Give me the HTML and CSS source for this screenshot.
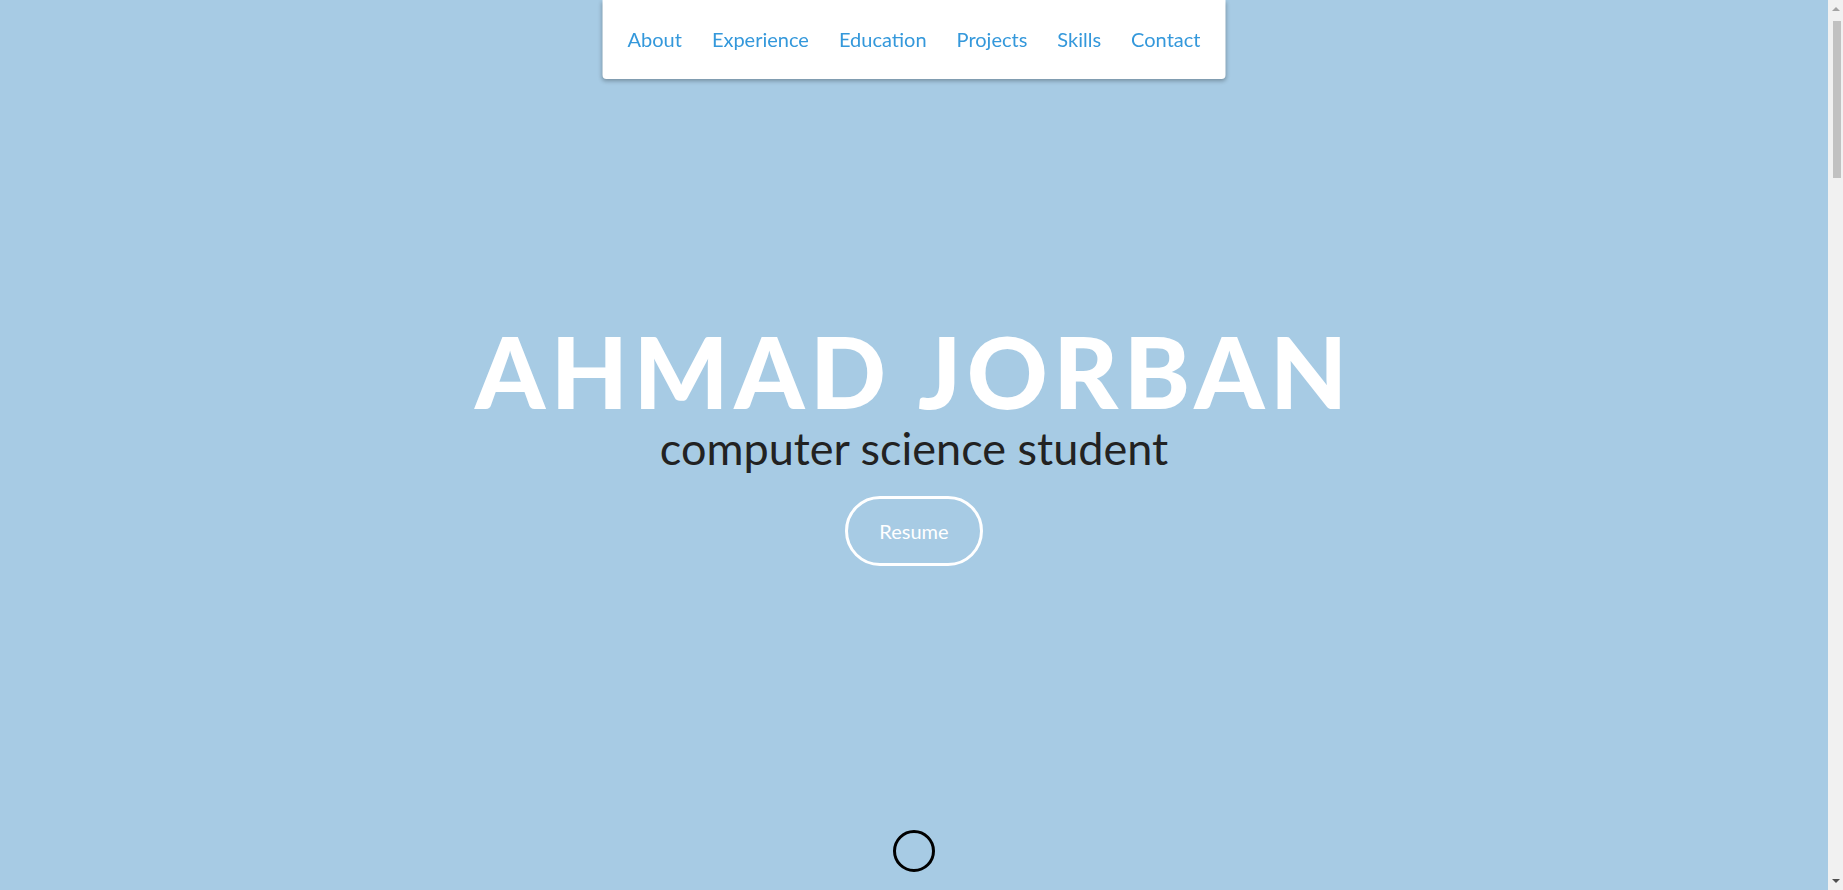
FILE: index.html
```html
<!DOCTYPE html>
<html lang="en">
<head>
<meta charset="utf-8">
<title>Ahmad Jorban</title>
<link rel="stylesheet" href="styles.css">
</head>
<body>
<div class="page">
  <nav class="topnav">
    <a href="#about">About</a>
    <a href="#experience">Experience</a>
    <a href="#education">Education</a>
    <a href="#projects">Projects</a>
    <a href="#skills">Skills</a>
    <a href="#contact">Contact</a>
  </nav>
  <header class="hero">
    <div class="hero-inner">
      <h1 class="name">AHMAD JORBAN</h1>
      <p class="tagline">computer science student</p>
      <a class="resume" href="#">Resume</a>
    </div>
    <span class="scroll-circle"></span>
  </header>
</div>
<div class="scrollbar" aria-hidden="true">
  <span class="sb-arrow sb-up"></span>
  <span class="sb-thumb"></span>
  <span class="sb-arrow sb-down"></span>
</div>
</body>
</html>
```
FILE: styles.css
```css
html, body {
  margin: 0;
  padding: 0;
}
body {
  font-family: Lato, "Open Sans", "Liberation Sans", sans-serif;
  background: #a7cbe4;
  overflow: hidden;
}
.page {
  margin-right: 15px;
}
.topnav {
  position: fixed;
  top: 0;
  left: calc((100% - 15px) / 2);
  transform: translateX(-50%);
  z-index: 10;
  display: flex;
  align-items: center;
  height: 79px;
  padding: 0 10px 1px;
  box-sizing: border-box;
  background: #fff;
  border-radius: 0 0 4px 4px;
  box-shadow: 0 2px 4px rgba(0, 0, 0, 0.3);
}
.topnav a {
  font-size: 20px;
  color: #3498db;
  text-decoration: none;
  padding: 0 15px;
}
.hero {
  position: relative;
  height: 890px;
  display: flex;
  align-items: center;
  justify-content: center;
}
.hero-inner {
  display: flex;
  flex-direction: column;
  align-items: center;
  margin-top: -9px;
}
.name {
  margin: 0;
  font-size: 100px;
  font-weight: 900;
  color: #fff;
  letter-spacing: 5.5px;
  line-height: 1.1;
}
.tagline {
  margin: 0 0 24px;
  font-size: 45px;
  color: #222;
  line-height: 1.05;
}
.resume {
  display: flex;
  align-items: center;
  justify-content: center;
  width: 132px;
  height: 64px;
  border: 3px solid #fff;
  border-radius: 36px;
  color: #fff;
  font-size: 20px;
  text-decoration: none;
}
.scroll-circle {
  position: absolute;
  left: 50%;
  bottom: 18px;
  width: 36px;
  height: 36px;
  margin-left: -21px;
  border: 3px solid #000;
  border-radius: 50%;
}
.scrollbar {
  position: fixed;
  top: 0;
  right: 0;
  z-index: 20;
  width: 15px;
  height: 100%;
  background: #f1f1f1;
  display: flex;
  flex-direction: column;
  align-items: center;
}
.sb-arrow {
  width: 0;
  height: 0;
  border-left: 4px solid transparent;
  border-right: 4px solid transparent;
}
.sb-up {
  margin-top: 7px;
  border-bottom: 4px solid #a3a3a3;
}
.sb-thumb {
  width: 8px;
  height: 157px;
  margin-top: 10px;
  margin-left: 2px;
  background: #c1c1c1;
}
.sb-down {
  margin-top: auto;
  margin-bottom: 7px;
  border-top: 4px solid #505050;
}
```
